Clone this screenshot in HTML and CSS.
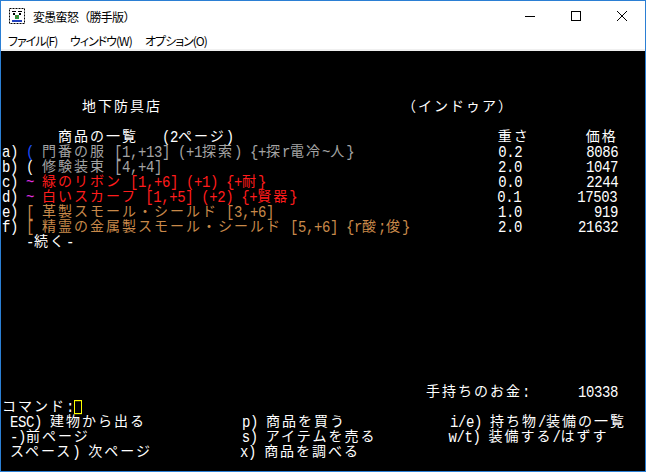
FILE: index.html
```html
<!DOCTYPE html>
<html lang="ja">
<head>
    <meta charset="UTF-8">
    <title>変愚蛮怒（勝手版）</title>
    <link rel="stylesheet" href="styles.css">
</head>
<body>
    <div class="window">
        <div class="titlebar">
            <svg class="app-icon" viewBox="0 0 16 16">
                <rect x="0.5" y="0.5" width="15" height="15" fill="#fff" stroke="#000" stroke-dasharray="2 1"/>
                <path d="M3 3h4v1H3zM9 3h4v1H9zM4 5h2v2H4zM10 5h2v2h-2z" fill="#000"/>
                <rect x="6" y="7" width="4" height="4" fill="#2a9a3a"/>
                <rect x="7" y="8" width="1" height="1" fill="#d02020"/>
                <rect x="3" y="12" width="10" height="2" fill="#2040c0"/>
            </svg>
            <span class="title">変愚蛮怒（勝手版）</span>
            <div class="controls">
                <span><svg width="10" height="10" viewBox="0 0 10 10"><path d="M0 5.5h10" stroke="#000"/></svg></span>
                <span><svg width="10" height="10" viewBox="0 0 10 10"><rect x="0.5" y="0.5" width="9" height="9" fill="none" stroke="#000"/></svg></span>
                <span><svg width="10" height="10" viewBox="0 0 10 10"><path d="M0 0L10 10M10 0L0 10" stroke="#000"/></svg></span>
            </div>
        </div>
        <div class="menubar">
            <span class="menu-file">ファイル(F)</span>
            <span class="menu-window">ウィンドウ(W)</span>
            <span>オプション(O)</span>
        </div>
        <div class="term">
            <div class="row"></div>
            <div class="row"></div>
            <div class="row"></div>
            <div class="row">          <span class="w">地下防具店</span>                              <span class="w">（インドゥア）</span></div>
            <div class="row"></div>
            <div class="row">       <span class="w">商品の一覧</span>   (2<span class="w">ページ</span>)                                 <span class="w">重さ</span>       <span class="w">価格</span></div>
            <div class="row">a) <span class="bl">(</span> <span class="gy"><span class="w">門番の服</span> [1,+13] (+1<span class="w">探索</span>) {+<span class="w">探</span>r<span class="w">電冷</span>~<span class="w">人</span>}</span>                  0.2        8086</div>
            <div class="row">b) ( <span class="gy"><span class="w">修験装束</span> [4,+4]</span>                                          2.0        1047</div>
            <div class="row">c) <span class="mg">~</span> <span class="rd"><span class="w">緑のリボン</span> [1,+6] (+1) {+<span class="w">耐</span>}</span>                             0.0        2244</div>
            <div class="row">d) <span class="mg">~</span> <span class="rd"><span class="w">白いスカーフ</span> [1,+5] (+2) {+<span class="w">賢器</span>}</span>                         0.1       17503</div>
            <div class="row">e) <span class="or">[</span> <span class="or"><span class="w">革製スモール・シールド</span> [3,+6]</span>                            1.0         919</div>
            <div class="row">f) <span class="or">[</span> <span class="or"><span class="w">精霊の金属製スモール・シールド</span> [5,+6] {r<span class="w">酸</span>;<span class="w">俊</span>}</span>           2.0       21632</div>
            <div class="row">   -<span class="w">続く</span>-</div>
            <div class="row"></div>
            <div class="row"></div>
            <div class="row"></div>
            <div class="row"></div>
            <div class="row"></div>
            <div class="row"></div>
            <div class="row"></div>
            <div class="row"></div>
            <div class="row"></div>
            <div class="row">                                                     <span class="w">手持ちのお金</span>:      10338</div>
            <div class="row"><span class="w">コマンド</span>:<span class="cursor"></span></div>
            <div class="row"> ESC) <span class="w">建物から出る</span>            p) <span class="w">商品を買う</span>             i/e) <span class="w">持ち物</span>/<span class="w">装備の一覧</span></div>
            <div class="row"> -)<span class="w">前ページ</span>                   s) <span class="w">アイテムを売る</span>         w/t) <span class="w">装備する</span>/<span class="w">はずす</span></div>
            <div class="row"> <span class="w">スペース</span>) <span class="w">次ページ</span>           x) <span class="w">商品を調べる</span></div>
        </div>
    </div>
</body>
</html>
```

FILE: styles.css
```css
* {
    margin: 0;
    padding: 0;
    box-sizing: border-box;
}
body {
    background: #fff;
}
.window {
    width: 646px;
    height: 472px;
    border: 1px solid #2b7fd4;
    display: flex;
    flex-direction: column;
    background: #fff;
    overflow: hidden;
}
.titlebar {
    height: 30px;
    flex-shrink: 0;
    display: flex;
    align-items: center;
}
.app-icon {
    width: 16px;
    height: 16px;
    margin-left: 8px;
}
.title {
    margin-left: 8px;
    font-family: "Noto Sans CJK JP", sans-serif;
    font-size: 12px;
    letter-spacing: -0.7px;
    color: #000;
}
.controls {
    margin-left: auto;
    height: 100%;
    display: flex;
}
.controls span {
    width: 46px;
    display: flex;
    align-items: center;
    justify-content: center;
}
.menubar {
    height: 20px;
    flex-shrink: 0;
    border-bottom: 2px solid #f0f0f0;
    display: flex;
    align-items: center;
    font-family: "Noto Sans CJK JP", sans-serif;
    font-size: 12px;
    font-feature-settings: "palt";
    letter-spacing: -1px;
    color: #000;
}
.menubar span {
    padding: 0 7px;
    white-space: nowrap;
}
.menu-file {
    width: 62px;
}
.menu-window {
    width: 75px;
}
.term {
    flex: 1;
    background: #000;
    color: #fff;
    padding: 3px 0 0 1px;
    font-family: "Liberation Mono", monospace;
    font-size: 14px;
    line-height: 15px;
    letter-spacing: -0.4px;
}
.row {
    height: 15px;
    white-space: pre;
    transform: scaleY(1.18);
}
.w {
    display: inline-block;
    line-height: 13px;
    font-family: "Noto Sans CJK JP", sans-serif;
    letter-spacing: 2px;
    transform: scaleY(0.85);
}
.gy { color: #a4a4a4; }
.bl { color: #1e50ff; }
.mg { color: #e030e0; }
.rd { color: #ff1c1c; }
.or { color: #c8894a; }
.cursor {
    display: inline-block;
    width: 8px;
    height: 12px;
    border: 1px solid #ffff00;
    vertical-align: -2px;
}
```
